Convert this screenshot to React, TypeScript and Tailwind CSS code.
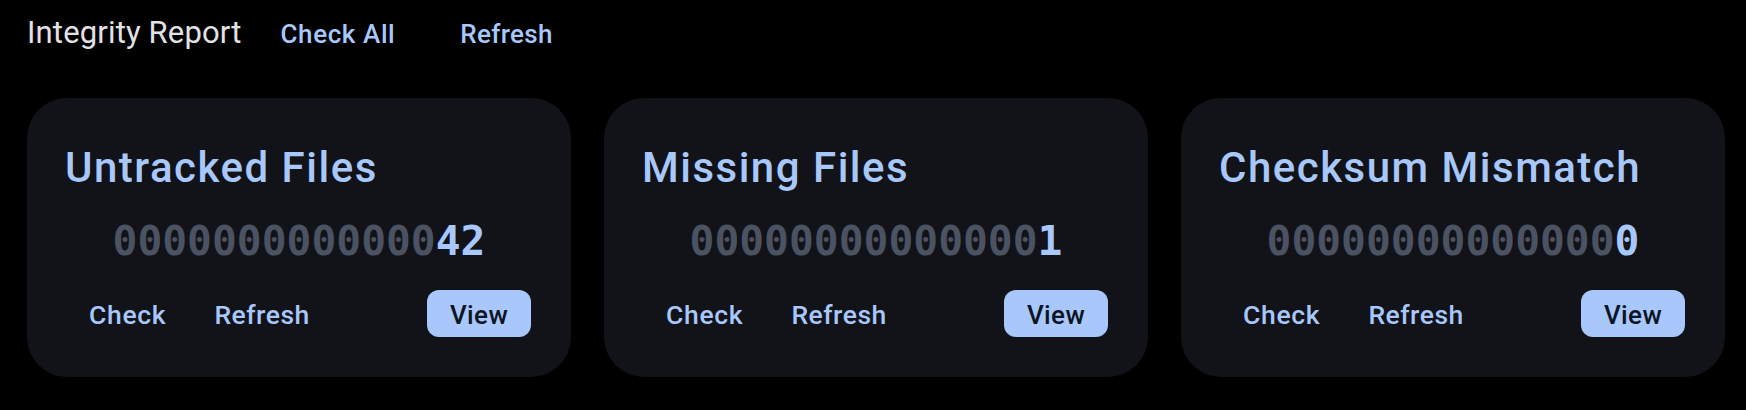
import React from "react";

type CardProps = { title: string; zeros: string; value: string };

function Card({ title, zeros, value }: CardProps) {
  return (
    <div className="w-[544px] shrink-0 h-[279px] rounded-[40px] bg-[#111319] pl-[38px] pr-[40px] pt-[45px] flex flex-col">
      <div className="text-[42px] leading-[50px] font-medium text-[#a8c7fa] tracking-[1.5px] whitespace-nowrap">
        {title}
      </div>
      <div
        className="mt-[24px] h-[48px] leading-[48px] text-[41.3px] font-bold text-center -ml-[38px] -mr-[40px] whitespace-nowrap"
        style={{ fontFamily: '"DejaVu Sans Mono", monospace' }}
      >
        <span className="text-[#4b5261]">{zeros}</span>
        <span className="text-[#a8c7fa]">{value}</span>
      </div>
      <div className="mt-[25px] flex items-center">
        <button className="h-[47px] pt-[3px] px-[24px] text-[26.5px] font-medium text-[#a8c7fa] tracking-[0.7px]">
          Check
        </button>
        <button className="h-[47px] pt-[3px] px-[24px] text-[26.5px] font-medium text-[#a8c7fa] tracking-[0.5px]">
          Refresh
        </button>
        <button className="ml-auto h-[47px] w-[104px] pt-[3px] rounded-[12px] bg-[#a8c7fa] text-[26px] font-medium text-[#0b1524] tracking-[0.4px]">
          View
        </button>
      </div>
    </div>
  );
}

export default function App() {
  return (
    <div
      className="w-[1746px] h-[410px] bg-black pl-[27px] pr-[18px] overflow-hidden"
      style={{ fontFamily: 'Roboto, "Liberation Sans", sans-serif' }}
    >
      <div className="flex items-baseline pt-[14px] h-[51px]">
        <div className="text-[31px] leading-[37px] text-[#e2e2e6] tracking-[0.15px] whitespace-nowrap">
          Integrity Report
        </div>
        <button className="ml-[15px] px-[24px] text-[26px] leading-[37px] font-medium text-[#a8c7fa] tracking-[0.6px]">
          Check All
        </button>
        <button className="ml-[17px] px-[24px] text-[26px] leading-[37px] font-medium text-[#a8c7fa] tracking-[0.3px]">
          Refresh
        </button>
      </div>
      <div className="mt-[47px] flex gap-[33px]">
        <Card title="Untracked Files" zeros="0000000000000" value="42" />
        <Card title="Missing Files" zeros="00000000000000" value="1" />
        <Card title="Checksum Mismatch" zeros="00000000000000" value="0" />
      </div>
    </div>
  );
}
